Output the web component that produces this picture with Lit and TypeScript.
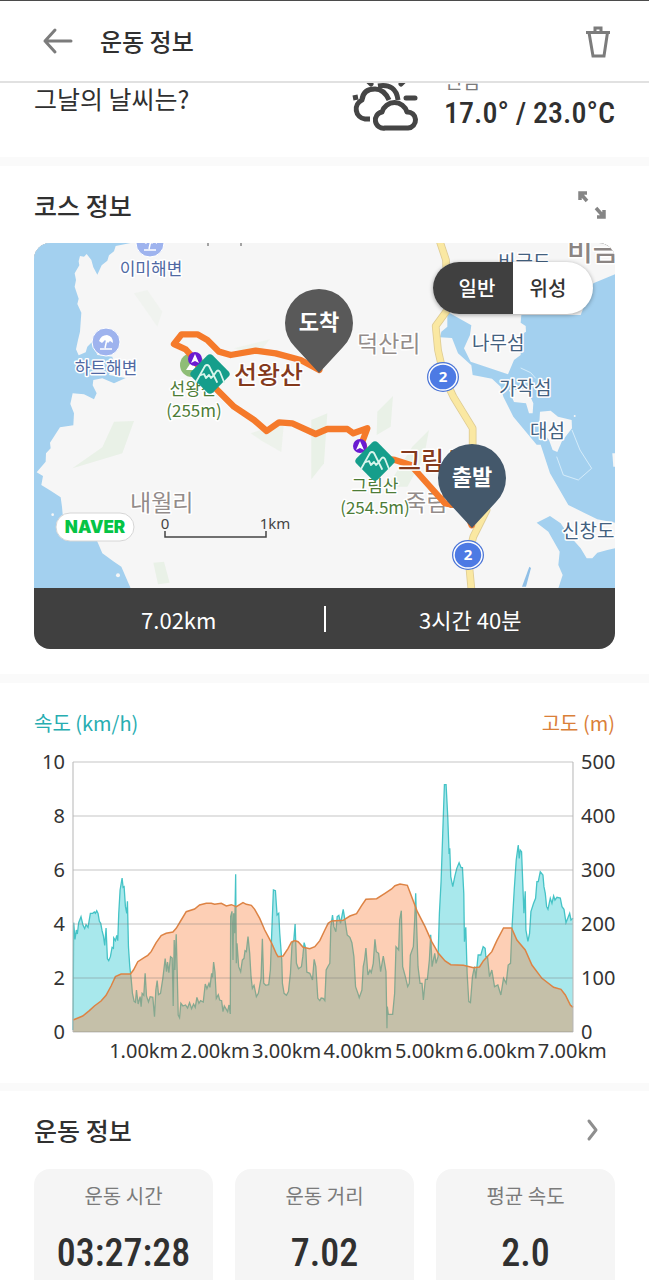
import { LitElement, html, svg, css } from "lit";
import { customElement, property, state } from "lit/decorators.js";
import { classMap } from "lit/directives/class-map.js";

type Point = [number, number];

const toPoints = (flat: string): Point[] =>
  flat.trim().split(/\s+/).map((p) => p.split(",").map(Number) as Point);

/* Samples in plot units: x 131-1628 is 0-7.02 km, y 996-186 is the full scale. */
const ALTITUDE = toPoints(`131,960 160,948 180,932 195,918 215,903 230,886 245,858 258,830 275,822 303,822
312,810 325,785 345,772 355,766 365,755 380,728 395,707 410,700 430,696 440,685 455,660 470,635 495,627
510,615 530,610 545,610 555,613 575,610 590,618 605,614 620,620 640,608 650,613 665,616 675,628 690,655
705,690 725,728 740,762 745,770 760,768 775,745 785,726 795,722 805,725 820,742 840,746 855,740 870,722
885,690 895,670 905,663 940,661 960,648 980,641 995,617 1008,598 1040,596 1065,580 1085,567 1095,557
1110,552 1132,556 1145,590 1162,635 1185,680 1205,725 1225,760 1245,783 1262,794 1300,796 1330,803
1348,801 1360,782 1385,755 1400,722 1420,684 1444,684 1460,720 1485,750 1505,795 1535,835 1570,862
1592,868 1605,885 1620,915 1628,922`);

const SPEED = toPoints(`131,990 133,668 137,718 141,690 144,702 148,668 155,650 161,676 166,686 170,674
176,682 183,640 190,640 195,636 198,640 202,632 206,640 210,664 214,670 218,692 222,708 226,736 230,684
234,776 238,782 243,770 248,742 252,745 253,714 258,722 262,706 265,722 268,640 272,570 278,534 281,562
284,560 288,620 292,640 294,604 297,740 301,800 305,835 309,880 314,904 318,907 321,870 326,912 332,890
335,920 338,880 343,886 347,820 351,888 357,906 362,890 370,892 375,950 379,870 383,842 387,884 393,880
400,835 407,776 411,815 414,786 418,818 423,770 428,774 431,918 434,720 436,810 440,703 443,820 446,945
450,953 454,910 460,918 468,915 474,924 480,908 486,926 492,912 497,922 502,892 508,910 513,902 521,906
527,852 532,866 538,850 541,862 546,820 549,832 552,786 556,816 560,895 566,884 570,900 576,902 580,935
584,918 590,928 594,935 598,915 602,942 603,650 607,634 610,780 612,640 615,700 618,523 620,790 622,730
627,800 633,815 638,780 643,775 646,752 650,755 655,710 660,760 664,830 668,865 673,856 680,890 686,880
694,835 698,716 702,850 708,856 717,854 722,810 726,700 731,570 737,572 742,645 747,640 750,700 756,780
758,850 763,880 770,886 776,875 782,820 787,730 792,722 796,672 800,790 806,806 815,800 819,770 823,728
828,746 831,816 840,820 848,840 853,778 858,800 864,895 870,902 874,894 880,895 885,902 889,810 895,798
900,790 903,680 908,645 912,680 918,695 922,650 927,646 932,670 940,628 946,665 952,705 960,712 966,728
972,770 977,860 984,880 988,893 996,870 1000,800 1004,780 1008,744 1014,825 1020,810 1024,818 1030,790
1035,718 1039,755 1046,760 1052,815 1060,768 1068,815 1071,985 1072,920 1075,943 1088,943 1094,880
1098,740 1106,750 1109,660 1114,632 1118,800 1126,830 1133,860 1138,850 1141,765 1150,740 1154,660
1157,580 1160,680 1164,800 1170,850 1176,850 1180,900 1186,838 1192,838 1198,780 1202,704 1206,800
1214,760 1218,790 1224,770 1228,640 1233,545 1238,400 1243,254 1248,254 1253,350 1257,462 1259,445
1262,530 1268,560 1274,530 1280,505 1287,488 1293,503 1297,503 1301,580 1303,725 1307,682 1311,820
1316,905 1321,908 1327,830 1333,800 1337,835 1344,765 1352,765 1359,740 1365,745 1367,770 1372,770
1378,830 1385,810 1393,860 1403,855 1412,885 1420,835 1428,850 1434,795 1441,790 1445,690 1452,570
1458,480 1464,435 1467,475 1470,450 1474,455 1478,560 1481,640 1485,574 1487,690 1493,724 1498,700
1502,635 1510,610 1516,595 1520,545 1524,545 1530,515 1538,525 1541,560 1545,580 1549,620 1553,628
1560,595 1565,610 1570,588 1574,600 1580,592 1590,594 1595,620 1601,628 1607,668 1614,650 1618,640
1622,660 1628,655`);

@customElement("course-map")
class CourseMap extends LitElement {
  static styles = css`
    :host { display: block; }
    svg { display: block; width: 100%; height: auto; }
    text { font-family: "Noto Sans CJK KR", sans-serif; }
    .halo { paint-order: stroke; stroke: #fff; stroke-width: 3px; stroke-linejoin: round; }
    .beach { font-size: 17px; fill: #5069a3; text-anchor: middle; }
    .isle { font-size: 19px; fill: #43617f; }
    .village { font-size: 23px; fill: #938c8a; }
    .town { font-size: 28px; font-weight: 500; fill: #8b8583; }
    .peak { font-size: 17px; fill: #4d7c37; text-anchor: middle; }
    .summit { font-size: 25px; font-weight: 500; fill: #843a1d; }
    .road { font: 700 15px "Noto Sans", sans-serif; fill: #fff; text-anchor: middle; }
    .pin { font-size: 22px; font-weight: 700; fill: #fff; text-anchor: middle; }
    .scale { font: 15px "Noto Sans", sans-serif; fill: #444; text-anchor: middle; }
    .brand { font: 900 17px Inter, sans-serif; fill: #05c446; text-anchor: middle; }
  `;

  private beach(x: number, y: number) {
    return svg`<g transform="translate(${x} ${y})">
      <circle r="14" fill="#9eb3ee" stroke="#fff" stroke-width="1"/>
      <path d="M-7 -1 Q-5 -7 1 -7 Q7 -6 7 1 L4 -1 L2 1 L-1 -2 L-4 1 Z" fill="#fff"/>
      <path d="M1 -3 L-1 6 M-6 7 H6" stroke="#fff" stroke-width="1.5" fill="none"/></g>`;
  }

  private shield(x: number, y: number) {
    return svg`<g transform="translate(${x} ${y})">
      <ellipse rx="16" ry="15" fill="#4a74d6"/>
      <ellipse rx="14" ry="13" fill="#4d7ae4" stroke="#fff" stroke-width="1.5"/>
      <text class="road" y="5">2</text></g>`;
  }

  private mountain(x: number, y: number) {
    return svg`<g transform="translate(${x} ${y})">
      <rect x="-15" y="-15" width="30" height="30" rx="4" transform="rotate(45)" fill="#159e8b"/>
      <path d="M-14 8 L-5 -8 Q-3 -10 -1 -8 L7 8 M4 1 L6 -2 Q8 -5 10 -2 L14 8 M-9 1 L-6 0 L-4 4 L-1 1 L1 4 L4 1"
        fill="none" stroke="#d9f5ec" stroke-width="1.8" stroke-linecap="round" stroke-linejoin="round"/></g>`;
  }

  private way(x: number, y: number) {
    return svg`<g transform="translate(${x} ${y})">
      <circle r="7" fill="#6a1bd1"/><path d="M-4 4 L0 -5 L4 4 L0 2 Z" fill="#fff"/></g>`;
  }

  private pin(x: number, y: number, color: string, label: string) {
    return svg`<g transform="translate(${x} ${y})">
      <path d="M0 50 L-24 24 A34 34 0 1 1 24 24 Z" fill=${color}/>
      <text class="pin" y="7">${label}</text></g>`;
  }

  render() {
    return html`<svg viewBox="0 0 581 345" role="img" aria-label="코스 지도">
      <rect width="581" height="345" fill="#f6f6f6"/>
      <g transform="scale(.33333) translate(0 -9)">
        <g fill="#e9f1e7">
          <path d="M240,545 L300,543 L265,640 L115,685 L205,622 Z"/>
          <path d="M650,580 L750,545 L742,636 L685,604 Z" opacity=".7"/><path d="M832,540 L880,520 L870,670 L832,718 Z"/>
          <path d="M1030,515 L1077,468 L1070,560 L1028,585 Z"/><path d="M1135,620 L1185,570 L1170,650 L1120,740 L1060,740 Z"/>
          <path d="M358,968 L390,965 L407,1028 L372,1033 Z"/><path d="M600,325 L708,298 L670,345 Z" opacity=".6"/>
          <path d="M300,160 L340,150 L385,215 L370,260 Z" opacity=".4"/>
        </g>
        <path fill="#a3d0ef" d="M0,9 L290,9 L245,18 L240,34 L225,46 L220,62 L203,76 L190,104 L178,82 L172,60 L158,42
          L150,50 L138,48 L134,64 L136,76 L122,100 L126,120 L122,140 L134,176 L130,192 L142,218 L138,275 L132,300 L126,328
          L134,346 L155,337 L160,320 L174,306 L190,345 L235,350 L240,370 L225,405 L275,414 L240,430 L205,415
          L178,420 L176,436 L188,460 L180,478 L150,463 L116,460 L109,492 L120,520 L118,556 L78,562 L48,608 L50,625
          L36,640 L35,665 L8,697 L27,708 L22,735 L50,752 L80,772 L84,800 L90,870 L132,902 L130,935 L100,932 L75,940
          L60,958 L44,958 L40,946 L56,934 L84,926 L100,904 L188,900 L205,940 L240,965 L262,980 L275,1010 L290,1045
          L0,1045 Z"/>
        <path fill="#a3d0ef" d="M1743,103 L1678,130 L1640,225 L1462,225 L1460,248 L1475,258 L1476,275 L1460,285
          L1460,345 L1440,360 L1422,403 L1310,365 L1290,325 L1308,285 L1312,256 L1240,215 L1240,260 L1222,275
          L1218,292 L1254,294 L1272,340 L1312,376 L1316,405 L1374,416 L1400,440 L1408,470 L1438,530
          L1508,614 L1520,614 L1548,700 L1603,795 L1650,818 L1690,838 L1743,848 Z"/>
        <path fill="#a3d0ef" d="M1508,848 L1548,828 L1580,850 L1600,880 L1640,925 L1658,955 L1675,955
          L1690,938 L1720,930 L1743,925 L1743,1045 L1573,1045 L1586,1005 L1573,975 L1577,935 L1543,875 Z"/>
        <path fill="#8fbfe6" d="M1486,980 L1464,1040 L1476,1040 L1491,984 Z"/>
        <g fill="#f6f6f6">
          <path d="M1425,450 L1480,450 L1498,490 L1496,520 L1485,520 L1476,490 L1440,486 Z"/>
          <path d="M1518,515 L1550,512 L1572,530 L1613,540 L1614,565 L1583,605 L1570,636 L1556,630 L1545,600 L1515,565 Z"/>
          <circle cx="252" cy="1006" r="6"/><circle cx="56" cy="824" r="4"/><circle cx="1622" cy="528" r="3"/>
          <path d="M1735,640h8v40h-5z"/>
        </g>
        <path fill="none" stroke="#d5ecfa" stroke-width="3" d="M1460,384 L1490,398 L1505,415 M1614,570 L1638,630 L1673,685 L1633,720 L1588,705 L1568,650"/>
        <g fill="none" stroke-linejoin="round">
          <path stroke="#dfcc93" stroke-width="23" d="M1216,0 L1236,60 L1240,210 L1205,258 L1212,330 L1230,410 L1258,470 L1316,565 L1316,700 L1358,810 L1318,890 L1303,950 L1312,1045"/>
          <path stroke="#fae8a2" stroke-width="18" d="M1216,0 L1236,60 L1240,210 L1205,258 L1212,330 L1230,410 L1258,470 L1316,565 L1316,700 L1358,810 L1318,890 L1303,950 L1312,1045"/>
        </g>
      </g>
      ${this.beach(116, 0)}${this.beach(72, 99)}
      <text class="beach halo" x="117" y="32">이미해변</text>
      <text class="beach halo" x="72" y="131">하트해변</text>
      <text class="village halo" x="323" y="109">덕산리</text>
      <text class="village halo" x="96" y="268">내월리</text>
      <text class="village halo" x="371" y="268">죽림리</text>
      <text class="isle halo" x="464" y="26">비금도</text>
      <text class="town halo" x="533" y="18">비금</text>
      <path d="M174 0v3M207 0v3" stroke="#888" stroke-width="1.5"/>
      <text class="isle halo" x="438" y="107">나무섬</text>
      <text class="isle halo" x="465" y="152">가작섬</text>
      <text class="isle halo" x="496" y="195">대섬</text>
      <text class="isle halo" x="528" y="295">신창도</text>
      ${this.shield(409, 134)}${this.shield(434, 312)}
      <circle cx="158" cy="122" r="12" fill="#8fbd76"/><path d="M152 127l6-9 6 9z" fill="#fff"/>
      <text class="peak halo" x="159" y="152">선왕산</text>
      <text class="peak halo" x="160" y="174">(255m)</text>
      <text class="peak halo" x="341" y="249">그림산</text>
      <text class="peak halo" x="341" y="271">(254.5m)</text>
      <g transform="scale(.33333) translate(0 -9)" fill="none" stroke="#f57a2b" stroke-width="19" stroke-linejoin="round" stroke-linecap="round">
        <path d="M856,390 L800,360 L725,340 L665,332 L590,345 L555,335 L520,300 L490,283 L443,283 L420,312 L455,328
          L475,350 L520,420 L555,455 L600,500 L660,540 L698,573 L735,547 L775,550 L845,582 L880,567 L940,567
          L958,580 L1000,565 L985,605 L1000,650 L1083,660 L1130,675 L1233,790 L1290,800 L1313,856"/>
      </g>
      ${this.way(161, 116)}${this.way(326, 203)}
      ${this.mountain(176, 131)}${this.mountain(341, 218)}
      <text class="summit halo" x="200" y="141">선왕산</text>
      <text class="summit halo" x="364" y="227">그림산</text>
      ${this.pin(285, 80, "#595959", "도착")}
      ${this.pin(438, 235, "#44586b", "출발")}
      <rect x="22" y="270" width="78" height="28" rx="14" fill="#fff" stroke="#d6d6d6"/>
      <text class="brand" x="61" y="290">NAVER</text>
      <path d="M131 288v6h101v-6" fill="none" stroke="#444" stroke-width="1.5"/>
      <text class="scale" x="131" y="286">0</text>
      <text class="scale" x="241" y="286">1km</text>
    </svg>`;
  }
}

@customElement("speed-chart")
class SpeedChart extends LitElement {
  static styles = css`
    :host { display: block; font: 20px/24px "Noto Sans", "Noto Sans CJK KR", sans-serif; color: #333; }
    .titles { display: flex; justify-content: space-between; line-height: 28px;
      font-family: "Noto Sans CJK KR", sans-serif; }
    .speed { color: #27adb1; }
    .altitude { color: #da8039; }
    .body { display: grid; grid-template-columns: 31px minmax(0, 1fr) 34px; column-gap: 8px; margin-top: 13px; }
    .axis { display: flex; flex-direction: column; justify-content: space-between; height: 294px; }
    .left { text-align: right; }
    .plot { display: block; width: 100%; height: 270px; margin-top: 12px; overflow: visible; }
    .ticks { grid-column: 2; display: grid; grid-template-columns: repeat(7, minmax(0, 1fr));
      margin: -5px -7% 0 7%; }
    .tick { display: flex; justify-content: center; white-space: nowrap; }
    path, line { vector-effect: non-scaling-stroke; }
  `;

  private line(points: Point[]) {
    return "M" + points.map((p) => p.join(",")).join(" L");
  }

  render() {
    const speed = this.line(SPEED);
    const altitude = this.line(ALTITUDE);
    return html`
      <div class="titles"><span class="speed">속도 (km/h)</span><span class="altitude">고도 (m)</span></div>
      <div class="body">
        <div class="axis left">${[10, 8, 6, 4, 2, 0].map((v) => html`<span>${v}</span>`)}</div>
        <svg class="plot" viewBox="131 186 1497 810" preserveAspectRatio="none" role="img" aria-label="속도와 고도">
          <path d="${speed} L1628,996 L131,996 Z" fill="#a8e8ec"/>
          <path d=${speed} fill="none" stroke="#45c3c6" stroke-width="1.3"/>
          <path d="${altitude} L1628,996 L131,996 Z" fill="rgba(249,122,49,.36)"/>
          <path d=${altitude} fill="none" stroke="#dd8344" stroke-width="1.5"/>
          ${[186, 348, 510, 672, 834, 996].map((y) => svg`<line x1="131" x2="1628" y1=${y} y2=${y} stroke="#787878" stroke-opacity=".28" stroke-width="1.5"/>`)}
          <path d="M131,186 V996 M1628,186 V996" stroke="#b5b5b5" stroke-width="1"/>
        </svg>
        <div class="axis">${[500, 400, 300, 200, 100, 0].map((v) => html`<span>${v}</span>`)}</div>
        <div class="ticks">${[1, 2, 3, 4, 5, 6, 7].map((v) => html`<span class="tick">${v.toFixed(2)}km</span>`)}</div>
      </div>`;
  }
}

@customElement("stat-card")
class StatCard extends LitElement {
  @property() label = "";
  @property() value = "";
  static styles = css`
    :host { display: flex; flex-direction: column; align-items: center; gap: 17px; background: #f5f5f5;
      border-radius: 16px; padding: 12px 8px 60px; }
    .label { font-size: 20px; line-height: 30px; color: #7b7b7b; }
    .value { font: 500 38px/50px "Roboto Condensed", Roboto, sans-serif; color: #303030; }
  `;
  render() {
    return html`<span class="label">${this.label}</span><span class="value">${this.value}</span>`;
  }
}

@customElement("app-root")
class AppRoot extends LitElement {
  @state() private layer = "일반";

  static styles = css`
    * { box-sizing: border-box; }
    :host { display: flex; flex-direction: column; height: 100vh; overflow: hidden; background: #fff;
      color: #303030; font-family: "Noto Sans CJK KR", sans-serif; }
    h1, h2 { margin: 0; font-size: 25px; line-height: 36px; font-weight: 500; }
    h1 { flex: 1; font-size: 24px; }
    button { border: 0; padding: 0; margin: 0; background: none; display: flex; cursor: pointer; }
    .bar { display: flex; align-items: center; flex: none; height: 83px; padding: 0 34px 0 42px; gap: 26px;
      background: #fff; border-top: 1px solid #4b4b4b; border-bottom: 2px solid #e1e1e1; }
    .page { flex: 1; min-height: 0; overflow-y: auto; scrollbar-width: none; }
    .section { padding: 0 34px; border-bottom: 9px solid #fafafa; }
    .weather { display: flex; justify-content: space-between; align-items: flex-end;
      margin-top: -40px; height: 123px; padding-bottom: 24px; }
    .question { font-weight: 400; line-height: 30px; padding-bottom: 20px; }
    .forecast { display: flex; align-items: flex-end; gap: 25px; }
    .temps { display: flex; flex-direction: column; }
    .place { font-size: 20px; line-height: 24px; color: #7b7b7b; }
    .degrees { font: 500 30px/40px "Roboto Condensed", Roboto, sans-serif; }
    .head { display: flex; justify-content: space-between; align-items: center; height: 78px; padding-right: 8px; }
    .course { padding-bottom: 25px; }
    .course .head { height: 77px; }
    .card { position: relative; border-radius: 16px; overflow: hidden; background: #404040; }
    .layers { position: absolute; top: 19px; right: 22px; display: flex; border-radius: 26px; overflow: hidden;
      background: #fff; box-shadow: 0 1px 4px rgba(0, 0, 0, .35); }
    .layer { height: 52px; width: 80px; align-items: center; justify-content: center; color: #333;
      font: 500 20px/52px "Noto Sans CJK KR", sans-serif; padding: 0 10px 0 0; }
    .layer:first-child { padding: 0 0 0 8px; }
    .layer.on { background: #404040; color: #fff; }
    .totals { display: flex; align-items: center; height: 61px; color: #fff; font-size: 22px; }
    .total { flex: 1; text-align: center; }
    .rule { width: 2px; height: 26px; background: #fff; }
    .chart { padding-top: 26px; padding-bottom: 20px; border-bottom-width: 8px; }
    .stats { border-bottom: 0; }
    .cards { display: grid; grid-template-columns: repeat(3, 1fr); gap: 22px; }
  `;

  render() {
    return html`
      <header class="bar">
        <button aria-label="뒤로"><svg width="32" height="32" fill="none" stroke="#7c7c7c" stroke-width="3" stroke-linecap="round" stroke-linejoin="round"><path d="M29 16H3M13 5L3 16L13 27"/></svg></button>
        <h1>운동 정보</h1>
        <button aria-label="삭제"><svg width="34" height="36" fill="none" stroke="#7c7c7c" stroke-width="3"><path d="M5 9.500H29M8 9.500L12 33H23L26.500 9.500M14 9V5H20V9"/></svg></button>
      </header>
      <main class="page">
        <section class="section weather">
          <h2 class="question">그날의 날씨는?</h2>
          <div class="forecast">
            <svg width="68" height="64" fill="none" stroke="#454545" stroke-width="5" stroke-linecap="round" stroke-linejoin="round">
              <path d="M20 15L17 12M50 15L53 12" />
              <path d="M27 17Q45 14 47 31M2 29L7 28" stroke-linecap="butt"/>
              <path d="M55 29H64"/>
              <path d="M19 50H14A10 10 0 0 1 11 31Q12 20 24 20Q33 20 38 31" stroke-linecap="butt"/>
              <path d="M34 59A8 8 0 0 1 31 43A13 13 0 0 1 56 43A8 8 0 0 1 57 59Z"/>
            </svg>
            <div class="temps"><span class="place">전남</span><span class="degrees">17.0° / 23.0°C</span></div>
          </div>
        </section>
        <section class="section course">
          <div class="head">
            <h2>코스 정보</h2>
            <button aria-label="확대"><svg width="30" height="30" fill="none" stroke="#858585" stroke-width="3.500"><path d="M3 10V3H10M3 3L10 11M27 20V27H20M27 27L19 18"/></svg></button>
          </div>
          <div class="card">
            <course-map></course-map>
            <div class="layers">
              ${["일반", "위성"].map((name) => html`<button class=${classMap({ layer: true, on: this.layer === name })}
                @click=${() => (this.layer = name)}>${name}</button>`)}
            </div>
            <div class="totals"><span class="total">7.02km</span><span class="rule"></span><span class="total">3시간 40분</span></div>
          </div>
        </section>
        <section class="section chart"><speed-chart></speed-chart></section>
        <section class="section stats">
          <div class="head">
            <h2>운동 정보</h2>
            <button aria-label="자세히"><svg width="28" height="28" fill="none" stroke="#8e8e8e" stroke-width="3" stroke-linecap="round" stroke-linejoin="round"><path d="M10 5L17 14L10 23"/></svg></button>
          </div>
          <div class="cards">
            <stat-card label="운동 시간" value="03:27:28"></stat-card>
            <stat-card label="운동 거리" value="7.02"></stat-card>
            <stat-card label="평균 속도" value="2.0"></stat-card>
          </div>
        </section>
      </main>`;
  }
}
